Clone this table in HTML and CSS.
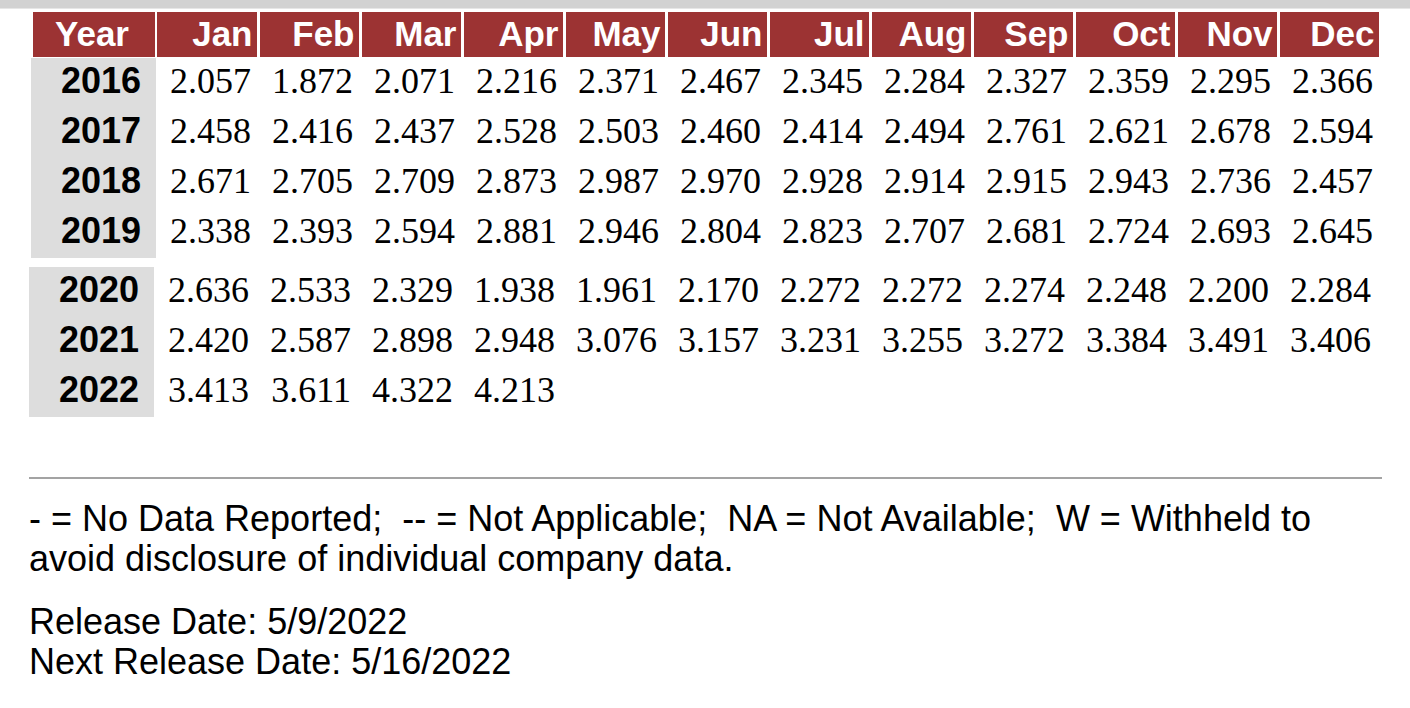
FILE: index.html
```html
<!DOCTYPE html>
<html lang="en">
<head>
<meta charset="utf-8">
<title>Monthly Data</title>
<link rel="stylesheet" href="styles.css">
</head>
<body>
<div class="topbar"></div>
<main class="page">
  <table class="data first">
    <colgroup><col class="c-year"><col span="12" class="c-month"></colgroup>
    <thead>
      <tr>
        <th class="h-year">Year</th><th>Jan</th><th>Feb</th><th>Mar</th><th>Apr</th><th>May</th><th>Jun</th><th>Jul</th><th>Aug</th><th>Sep</th><th>Oct</th><th>Nov</th><th>Dec</th>
      </tr>
    </thead>
    <tbody>
      <tr><td class="yr">2016</td><td>2.057</td><td>1.872</td><td>2.071</td><td>2.216</td><td>2.371</td><td>2.467</td><td>2.345</td><td>2.284</td><td>2.327</td><td>2.359</td><td>2.295</td><td>2.366</td></tr>
      <tr><td class="yr">2017</td><td>2.458</td><td>2.416</td><td>2.437</td><td>2.528</td><td>2.503</td><td>2.460</td><td>2.414</td><td>2.494</td><td>2.761</td><td>2.621</td><td>2.678</td><td>2.594</td></tr>
      <tr><td class="yr">2018</td><td>2.671</td><td>2.705</td><td>2.709</td><td>2.873</td><td>2.987</td><td>2.970</td><td>2.928</td><td>2.914</td><td>2.915</td><td>2.943</td><td>2.736</td><td>2.457</td></tr>
      <tr><td class="yr">2019</td><td>2.338</td><td>2.393</td><td>2.594</td><td>2.881</td><td>2.946</td><td>2.804</td><td>2.823</td><td>2.707</td><td>2.681</td><td>2.724</td><td>2.693</td><td>2.645</td></tr>
    </tbody>
  </table>
  <table class="data second">
    <colgroup><col class="c-year"><col span="12" class="c-month"></colgroup>
    <tbody>
      <tr><td class="yr">2020</td><td>2.636</td><td>2.533</td><td>2.329</td><td>1.938</td><td>1.961</td><td>2.170</td><td>2.272</td><td>2.272</td><td>2.274</td><td>2.248</td><td>2.200</td><td>2.284</td></tr>
      <tr><td class="yr">2021</td><td>2.420</td><td>2.587</td><td>2.898</td><td>2.948</td><td>3.076</td><td>3.157</td><td>3.231</td><td>3.255</td><td>3.272</td><td>3.384</td><td>3.491</td><td>3.406</td></tr>
      <tr><td class="yr">2022</td><td>3.413</td><td>3.611</td><td>4.322</td><td>4.213</td><td></td><td></td><td></td><td></td><td></td><td></td><td></td><td></td></tr>
    </tbody>
  </table>
  <hr class="rule">
  <p class="note">- = No Data Reported;&nbsp; -- = Not Applicable;&nbsp; NA = Not Available;&nbsp; W = Withheld to avoid disclosure of individual company data.</p>
  <p class="note">Release Date: 5/9/2022<br>Next Release Date: 5/16/2022</p>
</main>
</body>
</html>
```
FILE: styles.css
```css
html, body {
  margin: 0;
  padding: 0;
  background: #ffffff;
}

.topbar {
  height: 8px;
  background: #d2d2d2;
  border-bottom: 1px solid #e6e6e6;
}

.page {
  padding: 0 28px 0 29px;
}

.data {
  border-collapse: collapse;
  border-spacing: 0;
  table-layout: fixed;
  width: 1349px;
}

.data.first {
  margin-top: 3px;
}

.data.second {
  margin-top: 9px;
}

.c-year { width: 125px; }
.c-month { width: 102px; }

.data th {
  background: #9c3333;
  color: #ffffff;
  font-family: "Liberation Sans", Arial, sans-serif;
  font-weight: bold;
  font-size: 35px;
  height: 43px;
  padding: 0 4px 2px 0;
  text-align: right;
  border-left: 1px solid #ffffff;
  border-right: 3px solid #ffffff;
  border-bottom: 1px solid #ffffff;
  line-height: 43px;
}

.data th.h-year {
  text-align: center;
  border-left: 4px solid #ffffff;
  border-right: 2px solid #ffffff;
  padding: 0 4px 2px 0;
}

.data td {
  font-family: "Liberation Serif", "Times New Roman", serif;
  font-size: 36px;
  color: #000000;
  text-align: right;
  height: 46px;
  padding: 0 7px 4px 0;
  vertical-align: middle;
  line-height: 40px;
}

.data td.yr {
  background: #dddddd;
  font-family: "Liberation Sans", Arial, sans-serif;
  font-weight: bold;
  font-size: 36px;
  padding-right: 15px;
}

.rule {
  margin: 60px 0 0 0;
  border: 0;
  border-top: 2px solid #a3a3a3;
  height: 0;
}

.note {
  font-family: "Liberation Sans", Arial, sans-serif;
  font-size: 36px;
  line-height: 40px;
  color: #000000;
  margin: 20px 0 0 0;
}

.note + .note {
  margin-top: 23px;
}
```
